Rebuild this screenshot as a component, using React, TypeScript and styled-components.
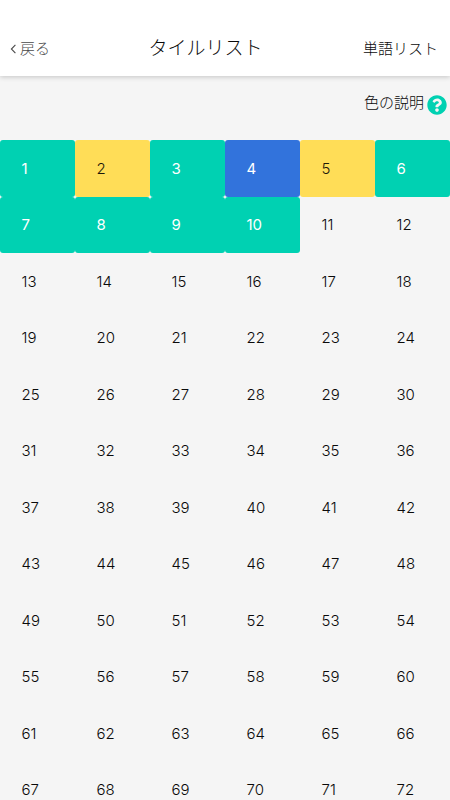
import React from "react";
import styled, { createGlobalStyle } from "styled-components";
import { FaQuestionCircle } from "react-icons/fa";

const GlobalStyle = createGlobalStyle`
  *, *::before, *::after { box-sizing: border-box; }
  body {
    margin: 0;
    background: #f5f5f5;
    color: #0a0a0a;
    font-family: Inter, "Noto Sans CJK JP", sans-serif;
    font-weight: 300;
    overflow: hidden;
  }
`;

const Screen = styled.main`
  height: 800px;
  overflow: hidden;
`;

const Header = styled.header`
  display: flex;
  justify-content: space-between;
  align-items: center;
  height: 76px;
  padding: 21px 12px 0 10px;
  background: #fff;
  box-shadow: 0 1px 5px rgba(0, 0, 0, 0.2);
`;

const BackButton = styled.button`
  display: flex;
  align-items: center;
  gap: 3px;
  padding: 0;
  border: 0;
  background: none;
  color: #4a4a4a;
  font: inherit;
  font-size: 15px;
  line-height: 24px;
`;

const Title = styled.h1`
  margin: 0 2px 0 0;
  font-size: 19px;
  font-weight: 300;
  line-height: 28px;
`;

const WordListLink = styled.a`
  font-size: 15px;
  line-height: 24px;
`;

const Legend = styled.div`
  display: flex;
  align-items: center;
  justify-content: flex-end;
  gap: 3px;
  height: 64px;
  padding: 0 3px 10px 0;
  font-size: 15px;
  line-height: 24px;
`;

const HelpIcon = styled(FaQuestionCircle)`
  width: 20px;
  height: 20px;
  margin-top: 3px;
  color: #00d1b2;
`;

const TileGrid = styled.div`
  display: grid;
  grid-template-columns: repeat(6, 75px);
  grid-auto-rows: 56.5px;
`;

type Tone = "primary" | "warning" | "link" | "plain";

const tones: Record<Tone, { fill: string; text: string; weight: number }> = {
  primary: { fill: "#00d1b2", text: "#fff", weight: 400 },
  warning: { fill: "#ffdd57", text: "#1c190a", weight: 300 },
  link: { fill: "#3273dc", text: "#fff", weight: 400 },
  plain: { fill: "transparent", text: "#0a0a0a", weight: 300 },
};

const Tile = styled.div<{ $tone: Tone }>`
  display: flex;
  align-items: center;
  padding: 1px 0 0 21.5px;
  border-radius: 3px;
  background: ${({ $tone }) => tones[$tone].fill};
  color: ${({ $tone }) => tones[$tone].text};
  font-size: 15px;
  font-weight: ${({ $tone }) => tones[$tone].weight};
  line-height: 24px;
`;

const studied: Tone[] = [
  "primary", "warning", "primary", "link", "warning",
  "primary", "primary", "primary", "primary", "primary",
];

const tiles = Array.from({ length: 72 }, (_, i) => ({
  number: i + 1,
  tone: studied[i] ?? "plain",
}));

export default function App() {
  return (
    <Screen>
      <GlobalStyle />
      <Header>
        <BackButton>
          <svg width="7" height="10" viewBox="0 0 7 10" fill="none" stroke="currentColor" strokeWidth="1.1">
            <path d="M5.4 .8 1.4 5l4 4.2" />
          </svg>
          戻る
        </BackButton>
        <Title>タイルリスト</Title>
        <WordListLink>単語リスト</WordListLink>
      </Header>
      <Legend>
        色の説明
        <HelpIcon />
      </Legend>
      <TileGrid>
        {tiles.map(({ number, tone }) => (
          <Tile key={number} $tone={tone}>{number}</Tile>
        ))}
      </TileGrid>
    </Screen>
  );
}
